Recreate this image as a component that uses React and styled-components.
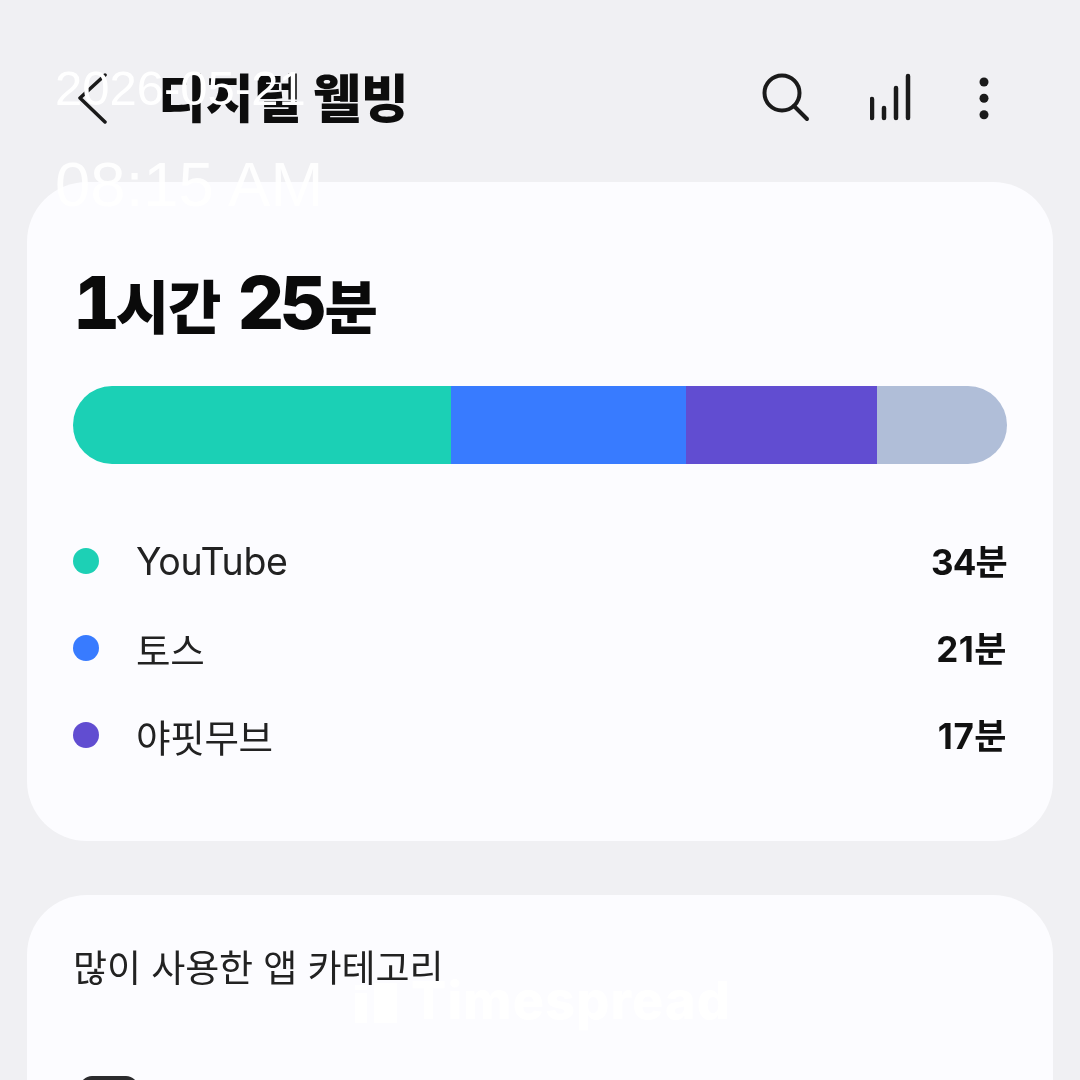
import React from "react";
import styled, { createGlobalStyle } from "styled-components";

const FONT = `"Inter", "Noto Sans CJK KR", "Liberation Sans", sans-serif`;

const Global = createGlobalStyle`
  html, body { margin: 0; padding: 0; background: #f0f0f3; }
  #root { width: 1080px; height: 1080px; overflow: hidden; }
`;

const Page = styled.div`
  position: relative;
  width: 1080px;
  height: 1080px;
  overflow: hidden;
  background: #f0f0f3;
`;

const Shot = styled.div`
  font-family: ${FONT};
  color: #111;
  filter: blur(0.7px);
`;

const Header = styled.header`
  height: 182px;
  box-sizing: border-box;
  padding: 0 88px 0 76px;
  display: flex;
  align-items: flex-start;
`;

const Back = styled.svg`
  width: 32px;
  height: 52px;
  margin-top: 73px;
  flex: none;
`;

const Title = styled.h1`
  margin: 65px 0 0 50px;
  font-size: 52px;
  line-height: 70px;
  font-weight: 800;
  color: #0d0d0d;
  flex: 1;
`;

const Actions = styled.div`
  display: flex;
  align-items: flex-start;
  margin-top: 70px;
`;

const ActionIcon = styled.svg`
  display: block;
  width: ${(p) => p.$w}px;
  height: 56px;
  margin-left: ${(p) => p.$gap}px;
`;

const Content = styled.main`
  padding: 0 27px;
  display: flex;
  flex-direction: column;
  gap: 54px;
`;

const Card = styled.section`
  background: #fcfcff;
  border-radius: 60px;
  box-sizing: border-box;
  padding: ${(p) => p.$pad};
  height: ${(p) => p.$h}px;
`;

const Total = styled.div`
  display: flex;
  align-items: baseline;
  height: 90px;
  color: #0a0a0a;
`;

const Big = styled.span`
  font-size: 73px;
  line-height: 90px;
  font-weight: 800;
  letter-spacing: -4.5px;
  font-variant-numeric: tabular-nums;
`;

const Unit = styled.span`
  font-size: 58px;
  line-height: 90px;
  font-weight: 800;
  letter-spacing: -1px;
  margin-left: ${(p) => p.$ml || 0}px;
  margin-right: ${(p) => p.$mr || 0}px;
`;

const Bar = styled.div`
  display: flex;
  height: 78px;
  margin-top: 38px;
  border-radius: 39px;
  overflow: hidden;
`;

const Segment = styled.div`
  width: ${(p) => p.$w}px;
  flex: none;
  background: ${(p) => p.$c};
`;

const Legend = styled.ul`
  list-style: none;
  margin: 67px 0 0;
  padding: 0;
  display: flex;
  flex-direction: column;
  gap: 27px;
`;

const Row = styled.li`
  display: flex;
  align-items: center;
  height: 60px;
`;

const Dot = styled.span`
  width: 26px;
  height: 26px;
  border-radius: 50%;
  background: ${(p) => p.$c};
  flex: none;
  margin-right: 37px;
`;

const Name = styled.span`
  flex: 1;
  font-size: 37.5px;
  font-weight: 400;
  color: #222;
  letter-spacing: -0.3px;
`;

const Value = styled.span`
  font-size: 35px;
  font-weight: 700;
  color: #111;
  letter-spacing: ${(p) => p.$ls}px;
  margin-bottom: 4px;
`;

const SectionTitle = styled.h2`
  margin: 0;
  font-size: 37px;
  line-height: 52px;
  font-weight: 400;
  color: #222;
  letter-spacing: -0.1px;
`;

const AppIcon = styled.div`
  width: 58px;
  height: 58px;
  margin: 81px 0 0 7px;
  border-radius: 12px;
  background: #2b2b2d;
`;

const Stamp = styled.div`
  position: absolute;
  left: 55px;
  top: ${(p) => p.$top}px;
  font-family: "Liberation Sans", sans-serif;
  font-size: ${(p) => p.$size}px;
  line-height: 1;
  color: #fff;
  opacity: ${(p) => p.$o};
  white-space: nowrap;
`;

const Watermark = styled.div`
  position: absolute;
  left: 354px;
  top: 975px;
  display: flex;
  align-items: center;
  gap: 13px;
  color: #fff;
  font-family: "Inter", "Liberation Sans", sans-serif;
  font-size: 52px;
  line-height: 52px;
  font-weight: 800;
  letter-spacing: 1.2px;
`;

const Logo = styled.svg`
  width: 44px;
  height: 44px;
  flex: none;
`;

const rows = [
  ["YouTube", "34분", "#1dd0b5", -0.8],
  ["토스", "21분", "#387bff", 0.5],
  ["야핏무브", "17분", "#614dd1", 0.5],
];

const segs = [
  [378, "#1bd0b5"],
  [235, "#387bff"],
  [191, "#614dd1"],
  [130, "#b0bed8"],
];

export default function App() {
  return (
    <Page>
      <Global />
      <Shot>
        <Header>
          <Back viewBox="0 0 32 52">
            <path d="M29 2 L4 25 L29 49" fill="none" stroke="#1a1a1a" strokeWidth="3.5" strokeLinecap="round" strokeLinejoin="round" />
          </Back>
          <Title>디지털 웰빙</Title>
          <Actions>
            <ActionIcon $w={50} $gap={0} viewBox="0 0 50 56">
              <circle cx="21" cy="23" r="17.5" fill="none" stroke="#1a1a1a" strokeWidth="4" />
              <path d="M33 36 L46 49" stroke="#1a1a1a" strokeWidth="4" strokeLinecap="round" />
            </ActionIcon>
            <ActionIcon $w={46} $gap={59} viewBox="0 0 46 56">
              <path d="M2 29 V48 M14 38 V48 M26 18 V48 M38 6 V48" stroke="#1a1a1a" strokeWidth="4.5" strokeLinecap="round" />
            </ActionIcon>
            <ActionIcon $w={16} $gap={60} viewBox="0 0 16 56">
              <circle cx="8" cy="12" r="4.5" fill="#1a1a1a" />
              <circle cx="8" cy="28.3" r="4.5" fill="#1a1a1a" />
              <circle cx="8" cy="44.7" r="4.5" fill="#1a1a1a" />
            </ActionIcon>
          </Actions>
        </Header>
        <Content>
          <Card $h={659} $pad="76px 46px 0">
            <Total>
              <Big>1</Big>
              <Unit $mr={17}>시간</Unit>
              <Big>25</Big>
              <Unit $ml={2}>분</Unit>
            </Total>
            <Bar>
              {segs.map(([w, c]) => (
                <Segment key={c} $w={w} $c={c} />
              ))}
            </Bar>
            <Legend>
              {rows.map(([n, v, c, ls]) => (
                <Row key={n}>
                  <Dot $c={c} />
                  <Name>{n}</Name>
                  <Value $ls={ls}>{v}</Value>
                </Row>
              ))}
            </Legend>
          </Card>
          <Card $h={400} $pad="48px 46px 0">
            <SectionTitle>많이 사용한 앱 카테고리</SectionTitle>
            <AppIcon />
          </Card>
        </Content>
      </Shot>
      <Stamp $top={64} $size={49} $o={1}>2026-05-21</Stamp>
      <Stamp $top={153} $size={63.5} $o={0.9}>08:15 AM</Stamp>
      <Watermark>
        <Logo viewBox="0 0 44 44">
          <path d="M1 6 H13 V11 H1 Z M1 14 H13 V44 H1 Z M20 4 H43 V44 H20 Z" fill="#fff" />
        </Logo>
        Timespread
      </Watermark>
    </Page>
  );
}
